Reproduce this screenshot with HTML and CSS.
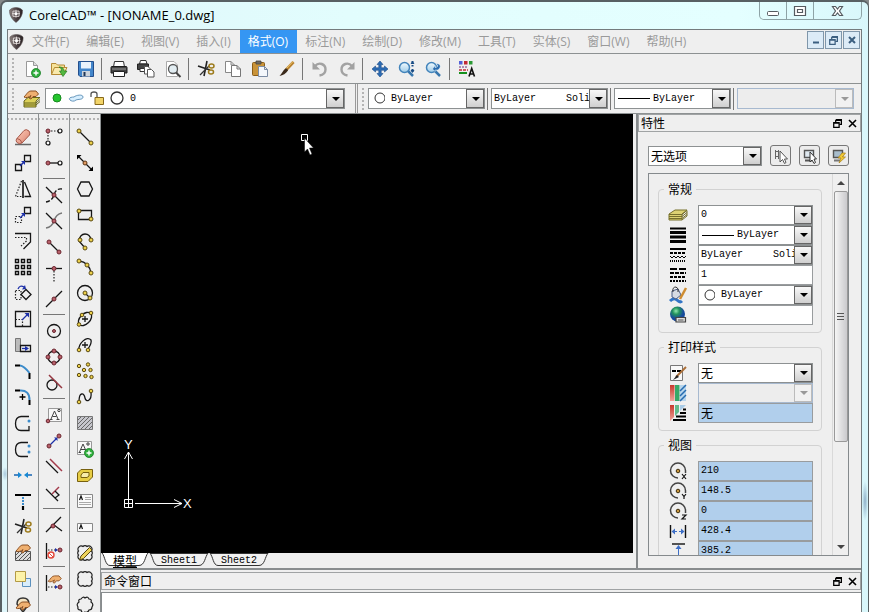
FILE: index.html
```html
<!DOCTYPE html>
<html lang="zh-CN">
<head>
<meta charset="utf-8">
<title>CorelCAD™ - [NONAME_0.dwg]</title>
<link rel="stylesheet" href="styles.css">
</head>
<body>
<svg class="defs" width="0" height="0" aria-hidden="true">
  <defs>
    <linearGradient id="shield-fill" x1="0" x2="1"><stop offset="0" stop-color="#8a7f7c"/><stop offset=".5" stop-color="#4c4244"/><stop offset="1" stop-color="#2a2224"/></linearGradient>
    <linearGradient id="glass" x1="0" x2="0" y1="0" y2="1"><stop offset="0" stop-color="#f2fbff"/><stop offset="1" stop-color="#9ecbe8"/></linearGradient>
    <radialGradient id="globe-fill" cx=".4" cy=".3"><stop offset="0" stop-color="#8fe8b0"/><stop offset=".45" stop-color="#23945c"/><stop offset="1" stop-color="#164a9c"/></radialGradient>
    <linearGradient id="rubber" x1="0" y1="0" x2="1" y2="1"><stop offset="0" stop-color="#ffd0bd"/><stop offset="1" stop-color="#d97f6c"/></linearGradient>
    <linearGradient id="redfade" x1="0" x2="0" y1="0" y2="1"><stop offset="0" stop-color="#c8382c"/><stop offset="1" stop-color="#f0a49a"/></linearGradient>
    <symbol id="shield" viewBox="0 0 16 18"><path d="M8 .5C11 .5 14 1.500 15.300 3.500C16 8 13 14 8 17.500C3 14 0 8 .7 3.500C2 1.500 5 .5 8 .5Z" fill="url(#shield-fill)" stroke="#554b4c" stroke-width=".6"/><path d="M4.500 4.500H11.500V10.500H4.500ZM8 3V12M3.500 7.500H12.500" fill="none" stroke="#e9e4e2"/><path d="M6.500 6H9.500V9H6.500Z" fill="#fff"/></symbol>
    <symbol id="plus-badge" viewBox="0 0 10 10"><circle cx="5" cy="5" r="4.500" fill="#2fae3c" stroke="#1b8027" stroke-width=".8"/><path d="M5 2.500V7.500M2.500 5H7.500" stroke="#fff" stroke-width="1.400"/></symbol>
    <symbol id="hand" viewBox="0 0 16 10"><path d="M1 7C4 4 5 1 8 1H13L15.500 4L13 6.500H10L8 9L6.500 8.500L8 5.500C6 7 3 8.500 1 7Z" fill="#efb070" stroke="#8b4f22"/></symbol>
    <symbol id="cut" viewBox="0 0 20 20"><path d="M2 7L14 11M11 2L8 17" stroke="#222" stroke-width="1.600" fill="none"/><path d="M4 16L13 7" stroke="#333" stroke-width="1.300"/><ellipse cx="15.500" cy="7" rx="2.500" ry="2" fill="none" stroke="#9d7b1c" stroke-width="1.500"/><ellipse cx="15" cy="13" rx="2.500" ry="2" fill="none" stroke="#9d7b1c" stroke-width="1.500"/></symbol>
    <symbol id="restore" viewBox="0 0 10 10"><path d="M3 .8H9.300V6H7M3 1.500H9.500M3 1V4" fill="none" stroke="currentColor" stroke-width="1.400"/><path d="M.8 4H6.800V9.200H.8ZM1 4.500H7" fill="none" stroke="currentColor" stroke-width="1.400"/></symbol>
    <symbol id="target" viewBox="0 0 20 20"><path d="M10 17A7.500 7.500 0 1 1 17.500 9.500V12" fill="none" stroke="#444" stroke-width="1.500"/><circle cx="10" cy="10" r="1.800" fill="#c9973c" stroke="#3f2d0c"/></symbol>
  </defs>
</svg>

<div class="window">
  <header class="titlebar">
    <svg class="logo"><use href="#shield"/></svg>
    <h1>CorelCAD™ - [NONAME_0.dwg]</h1>
    <div class="caption">
      <button aria-label="最小化"><svg width="14" height="12"><rect x="1.500" y="6.500" width="11" height="4" rx="1" fill="#fff" stroke="#555b60"/></svg></button>
      <button aria-label="最大化"><svg width="14" height="12"><path d="M1.500 1.500H12.500V10.500H1.500ZM4.500 4.500H9.500V7.500H4.500Z" fill="#fff" stroke="#555b60" stroke-width="1.200"/></svg></button>
      <button class="wide" aria-label="关闭"><svg width="14" height="12"><path d="M1.500 1.500H4.500L6.500 4L8.500 1.500H11.500L8.500 6L11.500 10.500H8.500L6.500 8L4.500 10.500H1.500L4.500 6Z" fill="#fff" stroke="#555b60" stroke-width="1.200"/></svg></button>
    </div>
  </header>

  <div class="client">
    <nav class="menubar">
      <svg class="logo small"><use href="#shield"/></svg>
      <button>文件(F)</button><button>编辑(E)</button><button>视图(V)</button><button>插入(I)</button><button class="active">格式(O)</button><button>标注(N)</button><button>绘制(D)</button><button>修改(M)</button><button>工具(T)</button><button>实体(S)</button><button>窗口(W)</button><button>帮助(H)</button>
      <div class="mdi">
        <button aria-label="最小化文档"><svg width="10" height="10"><path d="M2 7.500H8" stroke="#3c5f80" stroke-width="2"/></svg></button>
        <button aria-label="还原文档"><svg width="9" height="9"><use href="#restore"/></svg></button>
        <button aria-label="关闭文档"><svg width="10" height="10"><path d="M2 2L8 8M8 2L2 8" stroke="#3c5f80" stroke-width="2"/></svg></button>
      </div>
    </nav>

    <div class="toolbar" role="toolbar" aria-label="标准">
      <i class="grip"></i>
      <button aria-label="新建"><svg class="ic"><path d="M4.500 2.500H11.500L15.500 6.500V17.500H4.500Z" fill="#fff" stroke="#999"/><path d="M11.500 2.500V6.500H15.500" fill="#ddd" stroke="#999"/><use href="#plus-badge" x="9" y="9" width="10" height="10"/></svg></button>
      <button aria-label="打开"><svg class="ic"><path d="M2.500 15.500V4.500H7L8.500 6H15.500V8" fill="#f6e29a" stroke="#b58a35"/><path d="M2.500 15.500L5.500 8.500H18L14.500 15.500Z" fill="#f9e9ac" stroke="#b58a35"/><path d="M10 8C14 8 15 10 15 12H18L14 17.500L10.500 12H12.500C12.500 10 12 9 10 8Z" fill="#53b83f" stroke="#277c22" stroke-width=".7"/></svg></button>
      <button aria-label="保存"><svg class="ic"><path d="M2.500 2.500H17.500V17.500H4L2.500 16Z" fill="#4386cb" stroke="#244f8c"/><path d="M5 3H15V9.500H5Z" fill="#eaf3fc"/><path d="M6 12H14V17.500H6Z" fill="#cdd4dc"/><path d="M7.500 13H9.500V17H7.500Z" fill="#1e3657"/></svg></button>
      <i class="sep"></i>
      <button aria-label="打印"><svg class="ic"><path d="M5.500 2.500H14.500L15.500 8H4.500Z" fill="#fff" stroke="#333"/><path d="M2 8.500Q2 7.500 3 7.500H17Q18 7.500 18 8.500V14H2Z" fill="#444" stroke="#1c1c1c"/><path d="M3 10H17" stroke="#999"/><path d="M4.500 12.500H15.500V17.500H4.500Z" fill="#fff" stroke="#222"/></svg></button>
      <button aria-label="批量打印"><svg class="ic"><path d="M4.500 1.500H10L11 5H3.500Z" fill="#fff" stroke="#333"/><path d="M1.500 5H12.500V10.500H1.500Z" fill="#444" stroke="#222"/><path d="M4 9.500H10V12.500H4Z" fill="#fff" stroke="#333"/><path d="M8.500 7.500H12L14.500 10V15H8.500Z" fill="#fff" stroke="#555"/><path d="M11.500 10.500H15.500L18 13V18H11.500Z" fill="#fff" stroke="#555"/></svg></button>
      <button aria-label="打印预览"><svg class="ic"><path d="M3.500 2.500H11L14.500 6V17.500H3.500Z" fill="#fff" stroke="#aaa"/><circle cx="10" cy="10" r="4.500" fill="#e2edf2" stroke="#555" stroke-width="1.300"/><path d="M13 13.500L17.500 18" stroke="#444" stroke-width="2"/></svg></button>
      <i class="sep"></i>
      <button aria-label="剪切"><svg class="ic"><use href="#cut" width="20" height="20"/></svg></button>
      <button aria-label="复制"><svg class="ic"><path d="M2.500 2.500H8L11.500 6V13.500H2.500ZM8 2.500V6H11.500" fill="#fff" stroke="#888"/><path d="M8.500 6.500H14L17.500 10V17.500H8.500ZM14 6.500V10H17.500" fill="#fff" stroke="#777"/></svg></button>
      <button aria-label="粘贴"><svg class="ic"><rect x="2.500" y="3.500" width="12" height="13" rx="1" fill="#c99338" stroke="#8a5d18"/><path d="M6 2H11V5H6Z" fill="#706a60" stroke="#444" stroke-width=".8"/><path d="M8.500 7.500H14.500L17.500 10.500V17.500H8.500ZM14.500 7.500V10.500H17.500" fill="#f4f7fb" stroke="#7b8ba3"/></svg></button>
      <button aria-label="特性刷"><svg class="ic"><path d="M16.500 3L9 11" stroke="#b9822f" stroke-width="3"/><path d="M16 2.500L8.500 10.500" stroke="#f0c86e"/><path d="M10 9.500L11 11.500C9 14.500 6 16.500 2.500 17C5 14.500 6 11 8.500 9.500Z" fill="#3b2a1b"/></svg></button>
      <i class="sep"></i>
      <button aria-label="撤消"><svg class="ic"><path d="M5 7C9 2.500 15.500 5 15.500 10.500C15.500 14 12.500 16 9.500 16.500" fill="none" stroke="#a2a2a2" stroke-width="2.400"/><path d="M2.500 3V10.500H10Z" fill="#a2a2a2"/></svg></button>
      <button aria-label="恢复"><svg class="ic"><path d="M15 7C11 2.500 4.500 5 4.500 10.500C4.500 14 7.500 16 10.500 16.500" fill="none" stroke="#a2a2a2" stroke-width="2.400"/><path d="M17.500 3V10.500H10Z" fill="#a2a2a2"/></svg></button>
      <i class="sep"></i>
      <button aria-label="平移"><svg class="ic"><path d="M10 2L13 5.500H11.200V8.800H14.500V7L18 10L14.500 13V11.200H11.200V14.500H13L10 18L7 14.500H8.800V11.200H5.500V13L2 10L5.500 7V8.800H8.800V5.500H7Z" fill="#2c6db5" stroke="#1b4a86" stroke-width=".6"/></svg></button>
      <button aria-label="动态缩放"><svg class="ic"><path d="M11 12L16 17" stroke="#3977ad" stroke-width="2.500"/><circle cx="7.500" cy="8.500" r="5" fill="url(#glass)" stroke="#4384bb" stroke-width="1.500"/><path d="M15.500 2V4M15.500 6V7.500M15.500 10V13" stroke="#184c85" stroke-width="2"/><path d="M13.500 5L15.500 2L17.500 5ZM13.500 11L15.500 14L17.500 11Z" fill="#184c85"/></svg></button>
      <button aria-label="缩放"><svg class="ic"><path d="M11 12L16 17" stroke="#3977ad" stroke-width="2.500"/><circle cx="7.500" cy="8.500" r="5" fill="url(#glass)" stroke="#4384bb" stroke-width="1.500"/><path d="M8.500 10L11 6.500V8.500C14 8.500 14.500 6 12 5C16 3.500 18.500 8.500 13.500 11H11V12.500Z" fill="#2b6cae" stroke="#eaf6ff" stroke-width=".5"/></svg></button>
      <i class="sep"></i>
      <button aria-label="特性"><svg class="ic"><path d="M2 2H5.500V5.500H2Z" fill="#5160d8"/><path d="M7 2H10.500V5.500H7Z" fill="#c12a35"/><path d="M12 2H15.500V5.500H12Z" fill="#2c9a35"/><path d="M2 8H11" stroke="#6a2d79" stroke-dasharray="2 1"/><path d="M2 11H11" stroke="#c12a35" stroke-width="1.500" stroke-dasharray="3 1"/><path d="M2 14H10" stroke="#16911e" stroke-width="2"/><path d="M12 17.500L14.700 9.500L17.500 17.500M13 15H16.500" fill="none" stroke="#111" stroke-width="1.600"/></svg></button>
    </div>

    <div class="toolbar second" role="toolbar" aria-label="图层和特性">
      <i class="grip"></i>
      <button aria-label="图层管理器"><svg class="ic"><path d="M2 12L6 8.500H18L14 12V18H2Z" fill="#dcd159" stroke="#67651c"/><path d="M2 14H14L18 10.500M2 16H14L18 12.500" fill="none" stroke="#67651c"/><use href="#hand" x="1" y="1" width="16" height="10"/></svg></button>
      <div class="combo layers">
        <svg class="lead" width="82" height="19"><circle cx="11" cy="9" r="4" fill="#25c52e" stroke="#188a20"/><path d="M24 11C22 9 25 8 28 8C30 6 37 5 37 8C37 11 32 10 30 11C28 13 25 12 24 11Z" fill="#d7efff" stroke="#6796bb"/><path d="M49 8.500H57.500V15.500H49Z" fill="#f2d469" stroke="#87691a"/><path d="M45 8V5Q45 3 48 3Q51 3 51 5V8" fill="none" stroke="#555" stroke-width="1.300"/><circle cx="71" cy="9" r="6" fill="#fff" stroke="#333" stroke-width="1.300"/></svg>
        <select aria-label="图层"><option>0</option></select>
      </div>
      <i class="edge"></i>
      <i class="grip"></i>
      <div class="combo color"><svg class="lead" width="16" height="19"><circle cx="11" cy="9" r="5" fill="#fff" stroke="#333"/></svg><select aria-label="颜色"><option>ByLayer</option></select></div>
      <i class="bar"></i>
      <div class="combo"><select aria-label="线型"><option>ByLayer&nbsp;&nbsp;&nbsp;&nbsp;&nbsp;Soli</option></select></div>
      <i class="bar"></i>
      <div class="combo weight"><svg class="lead" width="36" height="18"><path d="M3 9.500H35" stroke="#000"/></svg><select aria-label="线宽"><option>ByLayer</option></select></div>
      <i class="bar"></i>
      <div class="combo disabled"><select aria-label="打印样式" disabled><option></option></select></div>
    </div>

    <div class="workspace">
      <div class="palette" role="toolbar" aria-label="修改">
        <button aria-label="删除"><svg class="ic"><path d="M2 17.500H18" stroke="#666" stroke-width="1.500"/><path d="M3.500 12L11 3.500Q13 1.500 16 4Q17.500 6 16.500 8L9 16Q6 17.500 4 15.500Q2.500 14 3.500 12Z" fill="url(#rubber)" stroke="#a75a4c"/><path d="M4 11.500Q8 12 9 16" fill="none" stroke="#a75a4c"/></svg></button>
        <button aria-label="移动"><svg class="ic"><path class="k" d="M11.500 2.500H17.500V8.500H11.500ZM2.500 11.500H8.500V17.500H2.500Z"/><path class="b" d="M7 13L11 9"/><path class="bf" d="M12 8V12L8 8Z"/></svg></button>
        <button aria-label="镜像"><svg class="ic"><path class="d" d="M8.500 2L2.500 17.500H9"/><path class="k" d="M11.500 3L17.500 17.500H11.500"/><path d="M10 1V19" stroke="#000" stroke-width="1.500"/></svg></button>
        <button aria-label="复制对象"><svg class="ic"><path class="k" d="M11.500 2.500H17.500V8.500H11.500Z"/><path class="d" d="M2.500 11.500H8.500V17.500H2.500Z"/><path class="b" d="M7 13L11 9"/><path class="bf" d="M12 8V12L8 8Z"/></svg></button>
        <button aria-label="偏移"><svg class="ic"><path class="k" d="M2 2.500H17.500V11L10.500 18"/><path class="d" d="M2 6.500H13.500V10L7 16"/></svg></button>
        <button aria-label="阵列"><svg class="ic"><path d="M2.500 2.500H5.500V5.500H2.500ZM8.500 2.500H11.500V5.500H8.500ZM14.500 2.500H17.500V5.500H14.500ZM2.500 8.500H5.500V11.500H2.500ZM8.500 8.500H11.500V11.500H8.500ZM14.500 8.500H17.500V11.500H14.500ZM2.500 14.500H5.500V17.500H2.500ZM8.500 14.500H11.500V17.500H8.500ZM14.500 14.500H17.500V17.500H14.500Z" fill="none" stroke="#111" stroke-width="1.400"/></svg></button>
        <button aria-label="旋转"><svg class="ic"><path class="d" d="M2.500 7.500H8V16.500H2.500Z"/><path class="k" d="M13 6.500L18 11.500L13 16.500L8 11.500Z"/><path class="b" d="M5 6Q7 1.500 11 4"/><path class="bf" d="M9 6.500L13 6L12 2Z"/></svg></button>
        <button aria-label="缩放对象"><svg class="ic"><path class="k" d="M2.500 2.500H17.500V17.500H2.500Z"/><path class="d" d="M2.500 10.500H9.500V17.500"/><path class="b" d="M9 11L14 6"/><path class="bf" d="M16 4V8.500L11.500 4Z"/></svg></button>
        <button aria-label="拉伸"><svg class="ic"><path d="M2.500 3.500H7.500V16.500H2.500Z" fill="#bbb" stroke="#777"/><path class="k" d="M7.500 10.500H17.500V16.500H7.500Z"/><path class="b" d="M9 13.500H13"/><path class="bf" d="M12 11L16 13.500L12 16Z"/></svg></button>
        <button aria-label="倒角"><svg class="ic"><path d="M2 4.500H7M16.500 12V18" stroke="#000" stroke-width="2"/><path d="M7 4.500Q11 5 16.500 12" fill="none" stroke="#3c8ccb" stroke-width="2"/></svg></button>
        <button aria-label="圆角"><svg class="ic"><path d="M2 3.500H7M16.500 13V18" stroke="#000" stroke-width="2"/><path d="M7 3.500Q16.500 3 16.500 13" fill="none" stroke="#3c8ccb" stroke-width="2"/><path d="M9.500 7V13M6.500 10H12.500" stroke="#000" stroke-width="1.300"/></svg></button>
        <button aria-label="打断"><svg class="ic"><path class="k" d="M16 3.500H8Q2.500 4 2.500 10.500Q2.500 17.500 8 17.500H16V13"/><circle cx="16" cy="8" r="1.500" fill="#3c8ccb"/></svg></button>
        <button aria-label="两点打断"><svg class="ic"><path class="k" d="M15 3.500H8Q2.500 4 2.500 10.500Q2.500 17.500 8 17.500H15"/><circle cx="16" cy="7" r="1.500" fill="#3c8ccb"/><circle cx="16" cy="13" r="1.500" fill="#3c8ccb"/></svg></button>
        <button aria-label="合并"><svg class="ic"><path d="M1 10H6M19 10H14" stroke="#1765b3" stroke-width="1.600"/><path d="M5 7L9 10L5 13ZM15 7L11 10L15 13Z" fill="#1688d4"/></svg></button>
        <button aria-label="延伸"><svg class="ic"><path d="M2 4H18M10 15V19" stroke="#000" stroke-width="2.200"/><path d="M10 6V14" stroke="#3c8ccb" stroke-width="2" stroke-dasharray="2 1"/></svg></button>
        <button aria-label="修剪"><svg class="ic"><use href="#cut" width="20" height="20"/></svg></button>
        <button aria-label="编辑填充"><svg class="ic"><path d="M2.500 8.500H17.500V17.500H2.500Z" fill="#ddd" stroke="#555"/><path d="M3 12L6 9M3 16L10 9M6 17L14 9M10 17L17 10M14 17L17 14" stroke="#555"/><use href="#hand" x="2" y="1" width="16" height="10"/></svg></button>
        <button aria-label="显示顺序"><svg class="ic"><path d="M9.500 9.500H17.500V17.500H9.500Z" fill="#d9edfb" stroke="#5b90bd"/><path d="M2.500 2.500H12.500V12.500H2.500Z" fill="#fdf3a8" stroke="#b39a45"/></svg></button>
        <button aria-label="编辑属性"><svg class="ic"><path d="M4 9Q4 3 10 3Q16 3 16 9L10 17Z" fill="#f5e4c2" stroke="#333" stroke-width="1.500"/><use href="#hand" x="2" y="6" width="16" height="10"/></svg></button>
      </div>

      <div class="palette" role="toolbar" aria-label="实体捕捉">
        <button aria-label="临时追踪"><svg class="ic"><path class="d" d="M4 4H15M4 5V15"/><circle class="r" cx="4" cy="4" r="2"/><circle class="w" cx="16" cy="4" r="2"/><circle class="w" cx="4" cy="16" r="2"/></svg></button>
        <button aria-label="捕捉自"><svg class="ic"><path class="k" d="M4 10H14"/><circle class="r" cx="4" cy="10" r="2"/><circle class="w" cx="16" cy="10" r="2"/></svg></button>
        <i class="rule"></i>
        <button aria-label="端点"><svg class="ic"><path class="k" d="M2 2L18 18"/><path class="k dash" d="M2 17Q8 16 10 10Q12 3 18 4"/><circle class="r" cx="10" cy="10" r="2"/></svg></button>
        <button aria-label="交点"><svg class="ic"><path class="k" d="M2 2L18 18"/><path d="M2 17Q8 16 10 10Q12 3 18 2" fill="none" stroke="#777" stroke-width="1.500"/><circle class="r" cx="10" cy="10" r="2"/></svg></button>
        <button aria-label="线端"><svg class="ic"><path class="k" d="M5 5L15 15"/><circle class="r" cx="5" cy="5" r="2"/><circle class="r" cx="15" cy="15" r="2"/></svg></button>
        <button aria-label="延长线"><svg class="ic"><path class="k" d="M2 5.500H18"/><path class="d" d="M10 8V19"/><circle class="r" cx="10" cy="5.500" r="2"/></svg></button>
        <button aria-label="中点"><svg class="ic"><path class="k" d="M2 18L18 2"/><circle class="r" cx="10" cy="10" r="2"/></svg></button>
        <i class="rule"></i>
        <button aria-label="圆心"><svg class="ic"><circle class="k" cx="10" cy="10" r="6.500"/><circle class="r" cx="10" cy="10" r="1.500"/></svg></button>
        <button aria-label="象限点"><svg class="ic"><circle class="k" cx="10" cy="10" r="6"/><circle class="r" cx="10" cy="4" r="2"/><circle class="r" cx="10" cy="16" r="2"/><circle class="r" cx="4" cy="10" r="2"/><circle class="r" cx="16" cy="10" r="2"/></svg></button>
        <button aria-label="切点"><svg class="ic"><circle class="k" cx="8" cy="12" r="5"/><path d="M5 2L18 15" stroke="#963740" stroke-width="1.500"/></svg></button>
        <i class="rule"></i>
        <button aria-label="插入点"><svg class="ic"><path d="M4.500 3.500H17.500V16.500H4.500Z" fill="#f8f8f8" stroke="#999"/><path class="k thin" d="M7 14L10.500 6L14 14M8.500 11.500H12.500M6 14.500H8.500M12.500 14.500H15.500"/><circle cx="15" cy="5.500" r="1.200" fill="none" stroke="#333"/><circle class="r" cx="4" cy="16" r="1.800"/></svg></button>
        <button aria-label="最近点"><svg class="ic"><path class="b" d="M6 14L12 8"/><path class="bf" d="M13.500 6.500V10L10 6.500Z"/><circle class="r" cx="5" cy="15" r="2"/><circle class="r" cx="15" cy="5" r="2"/></svg></button>
        <button aria-label="平行"><svg class="ic"><path class="k" d="M2 4L14 16"/><path d="M6 2L18 14" stroke="#a33b4b" stroke-width="1.500"/></svg></button>
        <button aria-label="垂足"><svg class="ic"><path class="k" d="M2 6L14 18"/><path d="M8 11L15 4" stroke="#a33b4b" stroke-width="1.500"/><path class="k" d="M11 8L15 12L11 15"/></svg></button>
        <i class="rule"></i>
        <button aria-label="节点"><svg class="ic"><path class="k" d="M2 17L17 2M10 10L18 16"/><circle class="r" cx="9" cy="11" r="2"/></svg></button>
        <button aria-label="无捕捉"><svg class="ic"><path class="k" d="M2.500 2V18"/><path class="d" d="M4 9H13"/><path class="bf" d="M11 7L14 9L11 11Z"/><circle class="r" cx="16" cy="9" r="2"/><circle cx="7" cy="14" r="3" fill="#fff" stroke="#e2483c" stroke-width="1.400"/><path d="M5 12L9 16" stroke="#e2483c"/></svg></button>
        <i class="rule"></i>
        <button aria-label="捕捉设置"><svg class="ic"><path class="k" d="M2.500 2V18"/><path class="d" d="M4 14H13"/><path class="bf" d="M11 12L14 14L11 16Z"/><circle class="r" cx="16" cy="14" r="2"/><use href="#hand" x="3" y="2" width="15" height="9"/></svg></button>
      </div>

      <div class="palette" role="toolbar" aria-label="绘制">
        <button aria-label="直线"><svg class="ic"><path class="k" d="M4 4L16 16"/><circle class="y" cx="4" cy="4" r="2"/><circle class="y" cx="16" cy="16" r="2"/></svg></button>
        <button aria-label="无限直线"><svg class="ic"><path class="k" d="M4 4L16 16"/><path d="M2 2H6.500L2 6.500ZM18 18H13.500L18 13.500Z"/><circle cx="10" cy="10" r="2" fill="#e09a62" stroke="#5d3615"/></svg></button>
        <button aria-label="多边形"><svg class="ic"><path class="k" d="M6 3H14L17.500 10L14 17H6L2.500 10Z"/></svg></button>
        <button aria-label="矩形"><svg class="ic"><path class="k" d="M3.500 5.500H16.500V14.500H3.500Z"/><circle class="y" cx="4" cy="6" r="2"/><circle class="y" cx="16" cy="14" r="2"/></svg></button>
        <button aria-label="三点圆弧"><svg class="ic"><path class="k" d="M10 17L4 10Q5 3 10 3Q15 3 16 9"/><circle class="y" cx="10" cy="17" r="2"/><circle class="y" cx="5" cy="9" r="2"/><circle class="y" cx="16" cy="9" r="2"/></svg></button>
        <button aria-label="圆弧"><svg class="ic"><path class="k" d="M4 4Q14 5 16 16"/><circle class="y" cx="4" cy="4" r="2"/><circle class="y" cx="12" cy="8" r="2"/><circle class="y" cx="16" cy="16" r="2"/></svg></button>
        <button aria-label="圆"><svg class="ic"><circle class="k" cx="10" cy="10" r="7.500"/><path class="k" d="M10 10L15 15"/><circle class="y" cx="10" cy="10" r="2"/><circle class="y" cx="15" cy="15" r="2"/></svg></button>
        <button aria-label="椭圆"><svg class="ic"><ellipse class="k" cx="10" cy="10" rx="8" ry="5" transform="rotate(-45 10 10)"/><path class="k" d="M10 7V13M7 10H13"/><circle class="y" cx="7" cy="6" r="1.800"/><circle class="y" cx="16" cy="4" r="1.800"/><circle class="y" cx="4" cy="15.500" r="1.800"/></svg></button>
        <button aria-label="椭圆弧"><svg class="ic"><path class="k" d="M4 15C3 9 12 0 16 5Q17 8 13 14"/><path class="k" d="M10 7V13M7 10H13"/><circle class="y" cx="4" cy="15" r="1.800"/><circle class="y" cx="13" cy="15" r="1.800"/></svg></button>
        <button aria-label="点"><svg class="ic"><circle class="y" cx="4" cy="5" r="1.700"/><circle class="y" cx="13" cy="3.500" r="1.700"/><circle class="y" cx="9" cy="9" r="1.700"/><circle class="y" cx="15.500" cy="9" r="1.700"/><circle class="y" cx="4" cy="14" r="1.700"/><circle class="y" cx="10.500" cy="15" r="1.700"/><circle class="y" cx="16.500" cy="16" r="1.700"/></svg></button>
        <button aria-label="样条曲线"><svg class="ic"><path class="k" d="M4 15C4 4 9 6 10 11C11 16 17 14 16 5"/><circle class="y" cx="4" cy="15" r="1.800"/><circle class="y" cx="16" cy="4" r="1.800"/></svg></button>
        <button aria-label="填充"><svg class="ic"><path d="M2.500 3.500H17.500V16.500H2.500Z" fill="#c6c6cc" stroke="#777"/><path d="M3 7L6 4M3 11L10 4M3 15L14 4M6 16L17 5M10 16L17 9M14 16L17 13" stroke="#666"/></svg></button>
        <button aria-label="注释"><svg class="ic"><path d="M2.500 2.500H16.500V15.500H2.500Z" fill="#f8f8f8" stroke="#999"/><path class="k thin" d="M4.500 13L8 5L11.500 13M6 10.500H10M3.500 13.500H6M10 13.500H13"/><circle cx="13" cy="5" r="1.200" fill="none" stroke="#333"/><use href="#plus-badge" x="9" y="9" width="10" height="10"/></svg></button>
        <button aria-label="区域"><svg class="ic"><path d="M6 4.500H17.500V12L13 16.500H2.500V8Z" fill="#e7cd45" stroke="#77600f"/><path d="M8 7.500H14V11L12 12.500H6V10Z" fill="#f8ecaa" stroke="#77600f"/></svg></button>
        <button aria-label="多行文字"><svg class="ic"><path d="M2.500 3.500H17.500V16.500H2.500Z" fill="#fafafa" stroke="#888"/><path d="M10 6.500H16M10 8.500H16M4 11.500H16M4 13.500H16" stroke="#aaa"/><path d="M4.500 9L6 5L7.500 9" fill="none" stroke="#111" stroke-width="1.200"/></svg></button>
        <button aria-label="单行文字"><svg class="ic"><path d="M2.500 6.500H17.500V14.500H2.500Z" fill="#fafafa" stroke="#888"/><path d="M4.500 12L6 8L7.500 12" fill="none" stroke="#111" stroke-width="1.200"/></svg></button>
        <button aria-label="草绘"><svg class="ic"><path class="cl" d="M4 4A2.500 2 0 0 1 8 3.500A2.500 2 0 0 1 12 3.500A2.500 2 0 0 1 16 4A2 2.500 0 0 1 16.500 8A2 2.500 0 0 1 16.500 12A2 2.500 0 0 1 16 16A2.500 2 0 0 1 12 16.500A2.500 2 0 0 1 8 16.500A2.500 2 0 0 1 4 16A2 2.500 0 0 1 3.500 12A2 2.500 0 0 1 3.500 8A2 2.500 0 0 1 4 4Z"/><path d="M6 13L14.500 4.500L17 7L8.500 15.500L4.500 17Z" fill="#eed35b" stroke="#594812"/></svg></button>
        <button aria-label="矩形修订云"><svg class="ic"><path class="cl" d="M4 4A2.500 2 0 0 1 8 3.500A2.500 2 0 0 1 12 3.500A2.500 2 0 0 1 16 4A2 2.500 0 0 1 16.500 8A2 2.500 0 0 1 16.500 12A2 2.500 0 0 1 16 16A2.500 2 0 0 1 12 16.500A2.500 2 0 0 1 8 16.500A2.500 2 0 0 1 4 16A2 2.500 0 0 1 3.500 12A2 2.500 0 0 1 3.500 8A2 2.500 0 0 1 4 4Z"/></svg></button>
        <button aria-label="椭圆修订云"><svg class="ic"><path class="cl" d="M6 4Q8 1 10 3Q13 1 14 4Q17 4 16 7Q19 9 17 12Q17 15 14 15Q13 18 10 17Q7 19 6 15Q2 15 3 12Q1 9 4 7Q3 4 6 4Z"/></svg></button>
      </div>

      <div class="main">
        <div class="upper">
          <section class="document">
            <div class="viewport">
              <svg class="ucs" width="72" height="72"><path d="M6.500 59.500V11M13 62.500H60M2.500 58.500H10.500V66.500H2.500ZM6.500 58V67M2 62.500H11M2.500 18L6.500 11L10.500 18M52 58.500L60 62.500L52 66.500" fill="none" stroke="#fff"/><text x="2" y="8">Y</text><text x="61" y="67">X</text></svg>
              <svg class="cursor" width="16" height="24"><path d="M1.500 1.500H7.500V7.500H1.500Z" fill="none" stroke="#fff"/><path d="M4.500 5V19L7.500 16L10 22L12 21L9.500 15H13.500Z" fill="#fff" stroke="#000" stroke-width=".5"/></svg>
            </div>
            <div class="tabs">
              <button class="on"><svg viewBox="0 0 48 14" preserveAspectRatio="none"><path d="M1 0C4 3 4 12.500 9 12.500H38C44 12.500 44 3 47 0"/></svg><span>模型</span></button>
              <button><svg viewBox="0 0 60 14" preserveAspectRatio="none"><path d="M1 .5H59C56 3 56 12.500 50 12.500H9C4 12.500 4 3 1 .5Z"/></svg><span>Sheet1</span></button>
              <button><svg viewBox="0 0 60 14" preserveAspectRatio="none"><path d="M1 .5H59C56 3 56 12.500 50 12.500H9C4 12.500 4 3 1 .5Z"/></svg><span>Sheet2</span></button>
            </div>
          </section>

          <aside class="panel">
            <div class="dock-title"><h2>特性</h2><button aria-label="浮动"><svg width="9" height="9"><use href="#restore"/></svg></button><button aria-label="关闭特性"><svg width="9" height="9"><path d="M1 1L8 8M8 1L1 8" stroke="#000" stroke-width="1.600"/></svg></button></div>
            <div class="picker">
              <div class="combo cjk"><select aria-label="选择"><option>无选项</option></select></div>
              <button aria-label="选择实体"><svg width="16" height="16"><path d="M2.500 2V11M5.500 2V11M2 3.500H6M2 8.500H6" stroke="#666"/><path d="M7 3V14L9.500 11.500L11.500 15.500L13 14.500L11.500 11H14.500Z" fill="#fff" stroke="#555"/></svg></button>
              <button aria-label="智能选择"><svg width="16" height="16"><path d="M2.500 2.500H11.500V9.500H2.500Z" fill="#dfe8ef" stroke="#555" stroke-width="1.400"/><path d="M3 12.500H10" stroke="#555" stroke-width="2"/><path d="M8 4V14L10 12L12 15.500L13.500 14.500L12 11H14.500Z" fill="#fff" stroke="#333"/></svg></button>
              <button aria-label="快速选择"><svg width="16" height="16"><path d="M2.500 2.500H11.500V9.500H2.500Z" fill="#a8bdcc" stroke="#555" stroke-width="1.400"/><path d="M3 12.500H9" stroke="#777" stroke-width="2"/><path d="M11 5L7 10H10L8 15L14.500 9H11.500L14.500 5Z" fill="#f2ca36" stroke="#a77e16" stroke-width=".7"/></svg></button>
            </div>
            <div class="scroller">
              <div class="groups">
                <fieldset>
                  <legend>常规</legend>
                  <div class="row"><svg class="ic"><path d="M1 9L7 5H19L14 9V15H1Z" fill="#ddd273" stroke="#77702d"/><path d="M1 9.500H14L19 5.500V11L14 15M1 11.500H14L19 7.500M1 13.500H14L19 9.500" fill="none" stroke="#77702d"/></svg><div class="combo"><select aria-label="图层"><option>0</option></select></div></div>
                  <div class="row"><svg class="ic"><path d="M2 3.500H18" stroke="#000" stroke-width="2"/><path d="M2 7.500H18M2 12H18M2 16.500H18" stroke="#000" stroke-width="3"/></svg><div class="combo weight"><svg class="lead" width="36" height="18"><path d="M3 9.500H35" stroke="#000"/></svg><select aria-label="线宽"><option>ByLayer</option></select></div></div>
                  <div class="row"><svg class="ic"><path d="M2 4H18" stroke="#000" stroke-width="2"/><path d="M2 8H18" stroke="#000" stroke-width="2" stroke-dasharray="3 1"/><path d="M2 11L4 13L6 11L8 13L10 11L12 13L14 11L16 13L18 11" fill="none" stroke="#000"/><path d="M2 16H18" stroke="#000" stroke-width="2" stroke-dasharray="1 1"/></svg><div class="combo"><select aria-label="线型"><option>ByLayer&nbsp;&nbsp;&nbsp;&nbsp;&nbsp;Soli</option></select></div></div>
                  <div class="row"><svg class="ic"><path d="M2 4H18" stroke="#000" stroke-width="2" stroke-dasharray="7 2"/><path d="M2 8H18" stroke="#000" stroke-width="2" stroke-dasharray="4 1"/><path d="M2 12H18" stroke="#000" stroke-width="2" stroke-dasharray="3 1"/><path d="M2 16H18" stroke="#000" stroke-width="2" stroke-dasharray="2 1"/></svg><input aria-label="线型比例" value="1"></div>
                  <div class="row"><svg class="ic"><path d="M2 16Q6 12 9 15Q12 18 14 16" fill="none" stroke="#3274c6" stroke-width="3"/><path d="M4 6L10 4L13 10L8 14L4 12Z" fill="#d7dbe3" stroke="#4c5c83"/><path d="M5 7Q4 2 8 2Q11 3 10 7" fill="none" stroke="#333"/><path d="M18 3L12 14" stroke="#ce8c31" stroke-width="2.500"/></svg><div class="combo color"><svg class="lead" width="16" height="18"><circle cx="11" cy="9" r="5" fill="#fff" stroke="#333"/></svg><select aria-label="颜色"><option>ByLayer</option></select></div></div>
                  <div class="row"><svg class="ic"><circle cx="9.500" cy="9" r="7.500" fill="url(#globe-fill)"/><path d="M8 12.500H17.500V17H8Z" fill="#ddd" stroke="#444" stroke-width="1.200"/><path d="M10 15H15.500" stroke="#555"/></svg><input aria-label="超链接"></div>
                </fieldset>
                <fieldset>
                  <legend>打印样式</legend>
                  <div class="row"><svg class="ic"><path d="M2.500 2.500H14.500V17.500H2.500Z" fill="#f8f8f8" stroke="#777"/><path d="M4 8H8M9 8H13" stroke="#000" stroke-width="2"/><path d="M18 4L8 14" stroke="#ab6f39" stroke-width="2"/><path d="M9 12L5 17L11 14Z" fill="#222"/></svg><div class="combo cjk"><select aria-label="打印样式"><option>无</option></select></div></div>
                  <div class="row"><svg class="ic"><path d="M2 2H6.500V18H2Z" fill="url(#redfade)"/><path d="M7 2H11.500V18H7Z" fill="#36a968"/><path d="M12 2H18V18H12Z" fill="#b7d5ec"/><path d="M12 8L18 2M12 13L18 7M12 18L18 12" stroke="#276cb0" stroke-width="1.500"/></svg><div class="combo disabled"><select aria-label="打印样式表" disabled><option></option></select></div></div>
                  <div class="row"><svg class="ic"><path d="M2 2H6V14L2 18Z" fill="url(#redfade)"/><path d="M7 2H11V9L7 13Z" fill="#65b98a"/><path d="M12 2H18L12 8Z" fill="#a9cbe6"/><path d="M15 6.500H18M12 10H18M8 13.500H18M5 17H18" stroke="#000" stroke-width="2.200"/></svg><input class="blue cjk" aria-label="打印表类型" value="无" readonly></div>
                </fieldset>
                <fieldset>
                  <legend>视图</legend>
                  <div class="row"><svg class="ic"><use href="#target" width="20" height="20"/><path d="M14 13L18 18M18 13L14 18" stroke="#111" stroke-width="1.200"/></svg><input class="blue" aria-label="中心 X" value="210" readonly></div>
                  <div class="row"><svg class="ic"><use href="#target" width="20" height="20"/><path d="M14 13L16 15.500L18 13M16 15.500V18" fill="none" stroke="#111" stroke-width="1.200"/></svg><input class="blue" aria-label="中心 Y" value="148.5" readonly></div>
                  <div class="row"><svg class="ic"><use href="#target" width="20" height="20"/><path d="M14 14H18L14 18H18" fill="none" stroke="#111" stroke-width="1.200"/></svg><input class="blue" aria-label="中心 Z" value="0" readonly></div>
                  <div class="row"><svg class="ic"><path d="M2.500 4V17M17.500 4V17" stroke="#111" stroke-width="1.400"/><path d="M4 10.500H9M11 10.500H16" stroke="#3e6fc7"/><path d="M3.500 10.500L7 7.500V13.500ZM16.500 10.500L13 7.500V13.500Z" fill="#3e6fc7"/></svg><input class="blue" aria-label="宽度" value="428.4" readonly></div>
                  <div class="row"><svg class="ic"><path d="M4 3H17" stroke="#111" stroke-width="1.400"/><path d="M10.500 5V18" stroke="#3e6fc7"/><path d="M10.500 4L7.500 8H13.500Z" fill="#3e6fc7"/></svg><input class="blue" aria-label="高度" value="385.2" readonly></div>
                </fieldset>
              </div>
              <div class="scrollbar"><i class="up"></i><div class="thumb"><i></i></div><i class="down"></i></div>
            </div>
          </aside>
        </div>

        <section class="command">
          <div class="dock-title"><h2>命令窗口</h2><button aria-label="浮动"><svg width="9" height="9"><use href="#restore"/></svg></button><button aria-label="关闭命令窗口"><svg width="9" height="9"><path d="M1 1L8 8M8 1L1 8" stroke="#000" stroke-width="1.600"/></svg></button></div>
          <textarea aria-label="命令" rows="1"></textarea>
        </section>
      </div>
    </div>
  </div>
</div>
</body>
</html>
```
FILE: styles.css
```css
* { box-sizing: border-box; }

:root {
  --face: #efefef;
  --line: #8d9192;
  --mono: "Liberation Mono", "Noto Sans CJK SC", monospace;
  --ui: "Open Sans", "Noto Sans CJK SC", sans-serif;
}

body {
  margin: 0;
  height: 100vh;
  overflow: hidden;
  background: #85898a;
  font: 12px/16px "Noto Sans CJK SC", sans-serif;
  color: #000;
}

button, select, input, textarea { font: inherit; color: inherit; margin: 0; border-radius: 0; }
button { padding: 0; border: 0; background: none; display: flex; align-items: center; justify-content: center; }
h1, h2 { margin: 0; font-size: 12px; font-weight: 400; }
svg { display: block; flex: none; }
.defs { position: absolute; }

.ic { width: 20px; height: 20px; }
.k { fill: none; stroke: #161616; stroke-width: 1.3; }
.k.thin { stroke: #444; stroke-width: 1; }
.dash { stroke-dasharray: 4 2; }
.d { fill: none; stroke: #222; stroke-width: 1.2; stroke-dasharray: 1.5 1.5; }
.b { fill: none; stroke: #1c2fa8; stroke-width: 1.3; }
.bf { fill: #1c2fa8; }
.r { fill: #b8606a; stroke: #6b2630; }
.w { fill: #fff; stroke: #111; stroke-width: 1.2; }
.y { fill: #ecd04a; stroke: #5b4a12; }
.cl { fill: none; stroke: #222; stroke-width: 1.2; }

/* Window frame */
.window {
  display: flex;
  flex-direction: column;
  height: 100vh;
  padding: 0 6px 0 5px;
  border: 2px solid #586063;
  border-width: 2px 1px 0 2px;
  border-radius: 7px 7px 0 0;
  background:
    radial-gradient(closest-side, #8fb0c8, transparent) 100% 84% / 6px 40px no-repeat,
    radial-gradient(closest-side, #a9c8dc, transparent) 0 78% / 6px 14px no-repeat,
    linear-gradient(90deg, #dff6fa, #e2fdfd 40%, #e4ffff 85%, #d9f7fb);
}
.titlebar { display: flex; align-items: flex-start; height: 27px; flex: none; }
.titlebar h1 { flex: 1; padding: 5px 0 0 6px; font: 13px/16px var(--ui); }
.logo { width: 14px; height: 16px; margin: 5px 0 0 2px; }
.caption {
  display: flex;
  border: 1px solid #8ea3a6;
  border-top: 0;
  border-radius: 0 0 5px 5px;
}
.caption button { width: 27px; height: 17px; border-right: 1px solid #8ea3a6; }
.caption .wide { width: 47px; border-right: 0; }

.client {
  flex: 1;
  min-height: 0;
  display: flex;
  flex-direction: column;
  border: 1px solid #747b7d;
  border-bottom: 0;
  background: var(--face);
}

.menubar { display: flex; height: 24px; flex: none; border-bottom: 1px solid var(--line); }
.menubar .logo { margin: 4px 0 0 1px; width: 15px; height: 16px; }
.menubar > button { padding: 0 9px 0 8px; color: #9a9a9a; font: 12px/16px var(--ui); white-space: nowrap; }
.menubar > button.active { background: #3596f3; color: #fff; }
.mdi { display: flex; gap: 1px; margin-left: auto; padding: 1px 1px 0 0; }
.mdi button { width: 17px; height: 18px; border: 1px solid #7f96aa; background: #dcebf7; color: #3c5f80; }

.toolbar {
  display: flex;
  align-items: center;
  height: 30px;
  flex: none;
  border-bottom: 1px solid var(--line);
}
.toolbar > button { width: 27px; height: 26px; }
.grip {
  width: 4px;
  height: 24px;
  margin: 0 3px;
  background: radial-gradient(circle, #b4b4b4 1px, transparent 1px) 0 0 / 4px 4px;
}
.sep { width: 6px; height: 22px; background: linear-gradient(#777, #777) 2px 0 / 1px 100% no-repeat; }
.second { padding-right: 7px; }
.second > .combo { flex: 117 1 0; height: 21px; }
.second > .combo.layers { flex: 303 1 0; }
.edge { width: 3px; height: 100%; margin-left: 10px; border: 1px solid #999; border-width: 0 1px; }
.bar { width: 1px; height: 22px; margin: 0 3px 0 2px; background: #777; }

/* Drop-downs */
.combo {
  position: relative;
  display: flex;
  min-width: 0;
  height: 20px;
  border: 1px solid var(--line);
  background: #fff;
}
.combo select {
  appearance: none;
  flex: 1;
  min-width: 0;
  padding: 0 16px 0 2px;
  border: 0;
  background: none;
  font: 10px/16px var(--mono);
  opacity: 1;
}
.combo.cjk select { font: 12px/16px "Noto Sans CJK SC", sans-serif; }
.combo::after {
  content: "";
  position: absolute;
  inset: 0 0 0 auto;
  width: 16px;
  border: 1px solid #666;
  background: linear-gradient(#f8f8f8, #cfcfcf);
  pointer-events: none;
}
.combo::before {
  content: "";
  position: absolute;
  z-index: 1;
  right: 4px;
  top: calc(50% - 2px);
  border: 4px solid transparent;
  border-top-color: #000;
  border-bottom: 0;
  pointer-events: none;
}
.combo.color select { padding-left: 6px; }
.combo.disabled { background: #ededed; border-color: #a7b9cf; }
.combo.disabled::after { border-color: #bbb; background: #f1f1f1; }
.combo.disabled::before { border-top-color: #999; }

/* Tool palettes */
.workspace { flex: 1; min-height: 0; display: flex; }
.palette {
  display: flex;
  flex-direction: column;
  flex: none;
  width: 31px;
  padding-top: 10px;
  border-right: 1px solid var(--line);
  overflow: hidden;
  background: radial-gradient(circle, #b4b4b4 1px, transparent 1px) 2px 3px / 4px 4px repeat-x;
}
.palette button { height: 26px; flex: none; }
.rule { flex: none; height: 1px; margin: 2px 4px 3px; background: #777; }

.main { flex: 1; min-width: 0; display: flex; flex-direction: column; }
.upper { flex: 1; min-height: 0; display: flex; }
.document { flex: 1; min-width: 0; display: flex; flex-direction: column; }
.viewport { position: relative; flex: 1; background: #000; }
.ucs { position: absolute; left: 21px; bottom: 40px; overflow: visible; }
.ucs text { fill: #fff; font: 13px "Liberation Sans", sans-serif; }
.cursor { position: absolute; left: 199px; top: 19px; }

.tabs { display: flex; height: 15px; flex: none; }
.tabs button { position: relative; width: 60px; font: 10px/12px var(--mono); }
.tabs .on { width: 48px; font: 12px/14px "Noto Sans CJK SC", sans-serif; text-decoration: underline; }
.tabs svg { position: absolute; inset: 0; width: 100%; height: 14px; fill: #f1f1f1; stroke: #333; }
.tabs .on svg { fill: #fff; }
.tabs span { position: relative; }

/* Docked panels */
.panel {
  flex: none;
  width: 225px;
  display: flex;
  flex-direction: column;
  margin-left: 3px;
  padding-bottom: 12px;
  border-left: 2px solid #85898b;
}
.dock-title {
  display: flex;
  align-items: center;
  height: 18px;
  flex: none;
  padding: 0 0 0 2px;
  border: 1px solid #a0a3a4;
}
.dock-title h2 { flex: 1; }
.dock-title button { width: 15px; height: 15px; }

.picker { display: flex; align-items: center; gap: 8px; padding: 13px 12px 7px 10px; }
.picker .combo { flex: 1; }
.picker button { width: 21px; height: 21px; border: 1px solid #777; border-radius: 3px; background: #ececec; }

.scroller { flex: 1; min-height: 0; display: flex; margin: 0 12px 0 10px; border: 1px solid #858a8d; }
.groups { flex: 1; min-width: 0; padding: 7px 10px 0 9px; overflow: hidden; }
fieldset { min-width: 0; margin: 0 0 6px; padding: 8px 8px 7px 9px; border: 1px solid #d2d2d2; border-radius: 4px; }
legend { padding: 0 4px; margin-left: -4px; }
.row { display: flex; gap: 10px; height: 20px; }
.row .combo, .row input { flex: 1; min-width: 0; }
.row input { padding: 0 2px; border: 1px solid #999c9e; background: #fff; font: 10px/16px var(--mono); }
.row input.blue { background: #b1cfec; }
.row input.cjk { font: 12px/16px "Noto Sans CJK SC", sans-serif; }

.scrollbar { width: 16px; display: flex; flex-direction: column; align-items: center; border-left: 1px solid #d9d9d9; }
.thumb {
  flex: none;
  width: 14px;
  height: 66%;
  margin: 6px 0 auto;
  display: flex;
  align-items: center;
  justify-content: center;
  border: 1px solid #999;
  border-radius: 2px;
  background: linear-gradient(90deg, #f5f5f5, #cacacd);
}
.thumb i { width: 7px; height: 8px; background: repeating-linear-gradient(#555 0 1px, transparent 1px 3px); }
.up, .down { border: 4px solid transparent; }
.up { margin-top: 7px; border-top: 0; border-bottom-color: #444; }
.down { margin-bottom: 6px; border-bottom: 0; border-top-color: #444; }

.command { flex: none; border-top: 2px solid #888c8e; }
.command .dock-title { margin: 2px 0; }
.command textarea {
  display: block;
  width: 100%;
  height: 20px;
  padding: 2px 4px;
  border: 1px solid #888c8e;
  border-width: 1px 0 0 1px;
  background: #fff;
  resize: none;
  overflow: hidden;
  font: 10px/16px var(--mono);
}
```
